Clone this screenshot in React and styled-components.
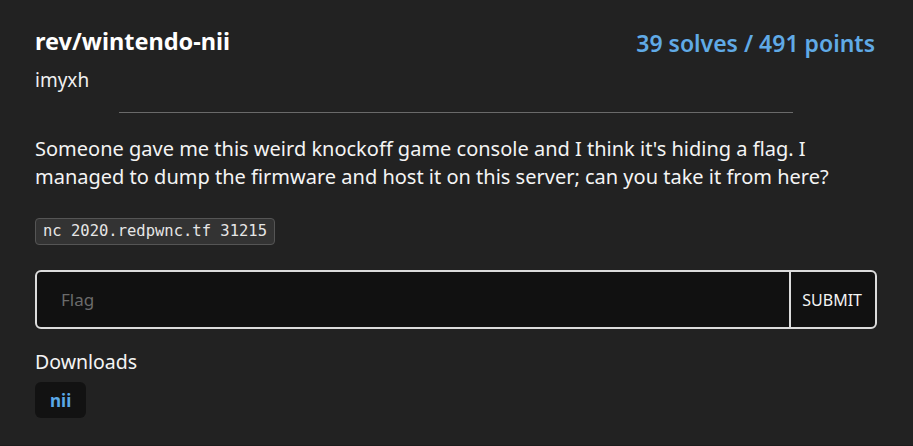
import React from "react";
import styled, { createGlobalStyle } from "styled-components";

const Global = createGlobalStyle`
  html, body { margin: 0; padding: 0; background: #222222; }
  body { font-family: "Noto Sans", "Open Sans", sans-serif; color: #f0f0f0; }
  * { box-sizing: border-box; }
`;

const Card = styled.div`
  width: 913px;
  height: 446px;
  background: #222222;
  border-bottom: 1px solid #1c1c1c;
  padding: 25px 36px 0 35px;
  display: flex;
  flex-direction: column;
`;

const Header = styled.div`
  display: flex;
  justify-content: space-between;
  align-items: flex-start;
`;

const TitleBlock = styled.div`
  display: flex;
  flex-direction: column;
`;

const Title = styled.h1`
  margin: 0;
  font-size: 23.5px;
  font-weight: 700;
  line-height: 32px;
  color: #ffffff;
`;

const Author = styled.div`
  margin-top: 11px;
  font-size: 19px;
  line-height: 24px;
  color: #f0f0f0;
`;

const Points = styled.div`
  margin-right: 2px;
  font-size: 23px;
  font-weight: 600;
  line-height: 36px;
  color: #60aae6;
`;

const Divider = styled.hr`
  width: 80%;
  margin: 20px auto 22px;
  border: 0;
  border-top: 1px solid #6a6a6a;
`;

const Description = styled.p`
  margin: 0;
  font-size: 20px;
  line-height: 28px;
  color: #f4f4f4;
`;

const Code = styled.code`
  align-self: flex-start;
  margin-top: 27px;
  padding: 3px 7px;
  font-family: "DejaVu Sans Mono", "Liberation Mono", monospace;
  font-size: 15.5px;
  line-height: 19px;
  color: #e6e6e6;
  background: #333333;
  border: 1px solid #555555;
  border-radius: 4px;
`;

const Form = styled.form`
  margin-top: 25px;
  display: flex;
  height: 59px;
  border: 2px solid #dcdcdc;
  border-radius: 6px;
  background: #111111;
  overflow: hidden;
`;

const FlagInput = styled.input`
  flex: 1;
  border: 0;
  outline: none;
  background: transparent;
  padding: 0 24px;
  font-family: inherit;
  font-size: 17px;
  color: #eee;
  &::placeholder { color: #6b6b6b; }
`;

const SubmitButton = styled.button`
  border: 0;
  border-left: 2px solid #dcdcdc;
  background: transparent;
  padding: 0 13px 0 11px;
  font-family: inherit;
  font-size: 16px;
  color: #f4f4f4;
`;

const SectionLabel = styled.div`
  margin-top: 19px;
  font-size: 19.5px;
  line-height: 28px;
  color: #f4f4f4;
`;

const DownloadButton = styled.a`
  align-self: flex-start;
  margin-top: 6px;
  padding: 0 15px;
  height: 36px;
  display: flex;
  align-items: center;
  background: #121212;
  border-radius: 6px;
  font-size: 17px;
  font-weight: 700;
  color: #5aa8e6;
  text-decoration: none;
`;

export default function App() {
  return (
    <>
      <Global />
      <Card>
        <Header>
          <TitleBlock>
            <Title>rev/wintendo-nii</Title>
            <Author>imyxh</Author>
          </TitleBlock>
          <Points>39 solves / 491 points</Points>
        </Header>
        <Divider />
        <Description>
          Someone gave me this weird knockoff game console and I think it's hiding a flag. I
          <br />
          managed to dump the firmware and host it on this server; can you take it from here?
        </Description>
        <Code>nc 2020.redpwnc.tf 31215</Code>
        <Form onSubmit={(e) => e.preventDefault()}>
          <FlagInput placeholder="Flag" />
          <SubmitButton type="submit">SUBMIT</SubmitButton>
        </Form>
        <SectionLabel>Downloads</SectionLabel>
        <DownloadButton href="#">nii</DownloadButton>
      </Card>
    </>
  );
}
